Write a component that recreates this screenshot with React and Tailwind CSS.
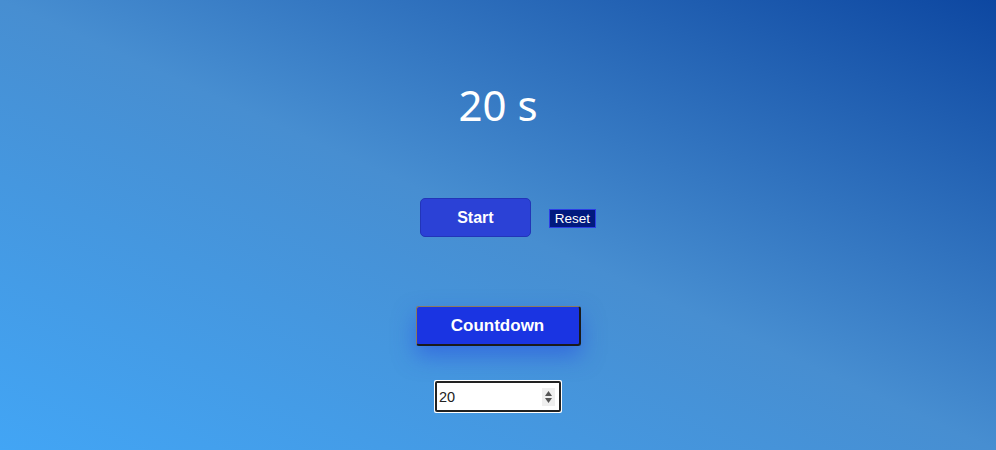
import { useState } from "react";

export default function App() {
  const [value, setValue] = useState(20);

  return (
    <div className="w-[996px] h-[450px] overflow-hidden bg-[linear-gradient(to_right_top,#42a5f5,#478ed1_50%,#0d47a1)] flex flex-col items-center">
      <h1 className="mt-[76px] h-[58px] leading-[58px] text-[42px] text-white font-normal font-['Noto_Sans',sans-serif]">
        {value} s
      </h1>

      <div className="mt-[64px] flex items-center gap-[18px] ml-[20px]">
        <button className="w-[111px] h-[39px] rounded-[5px] bg-[#2b41d6] border border-[#2235b8] text-white text-[16px] font-bold font-['Liberation_Sans',sans-serif]">
          Start
        </button>
        <button className="h-[19px] px-[5px] mt-[1px] bg-[#021a7e] border border-[#2c3ee6] text-white text-[13.5px] leading-[15px] font-['Liberation_Sans',sans-serif]">
          Reset
        </button>
      </div>

      <button className="mt-[69px] w-[165px] h-[40px] rounded-[3px] bg-[#1a34e2] border-t border-l border-r-2 border-b-2 border-t-[#8a7a60] border-l-[#8a7a60] border-r-[#1a1a1a] border-b-[#1a1a1a] text-white text-[17px] font-bold font-['Liberation_Sans',sans-serif] shadow-[0_10px_22px_rgba(35,70,225,0.5)]">
        Countdown
      </button>

      <div className="relative mt-[34px] p-px bg-white rounded-[2px]">
        <input
          type="number"
          value={value}
          onChange={(e) => setValue(e.target.value)}
          className="block w-[126px] h-[31px] border-2 border-[#222] rounded-[2px] bg-white pl-[2px] text-[14.5px] text-[#222] font-['Liberation_Sans',sans-serif] outline-none [appearance:textfield] [&::-webkit-inner-spin-button]:appearance-none"
        />
        <div className="absolute right-[7px] top-[8px] w-[13px] h-[18px] bg-[#efefef] flex flex-col items-center justify-center gap-[2px]">
          <svg width="7" height="5" viewBox="0 0 7 5">
            <polygon points="3.5,0 7,5 0,5" fill="#555" />
          </svg>
          <svg width="7" height="5" viewBox="0 0 7 5">
            <polygon points="0,0 7,0 3.5,5" fill="#555" />
          </svg>
        </div>
      </div>
    </div>
  );
}
